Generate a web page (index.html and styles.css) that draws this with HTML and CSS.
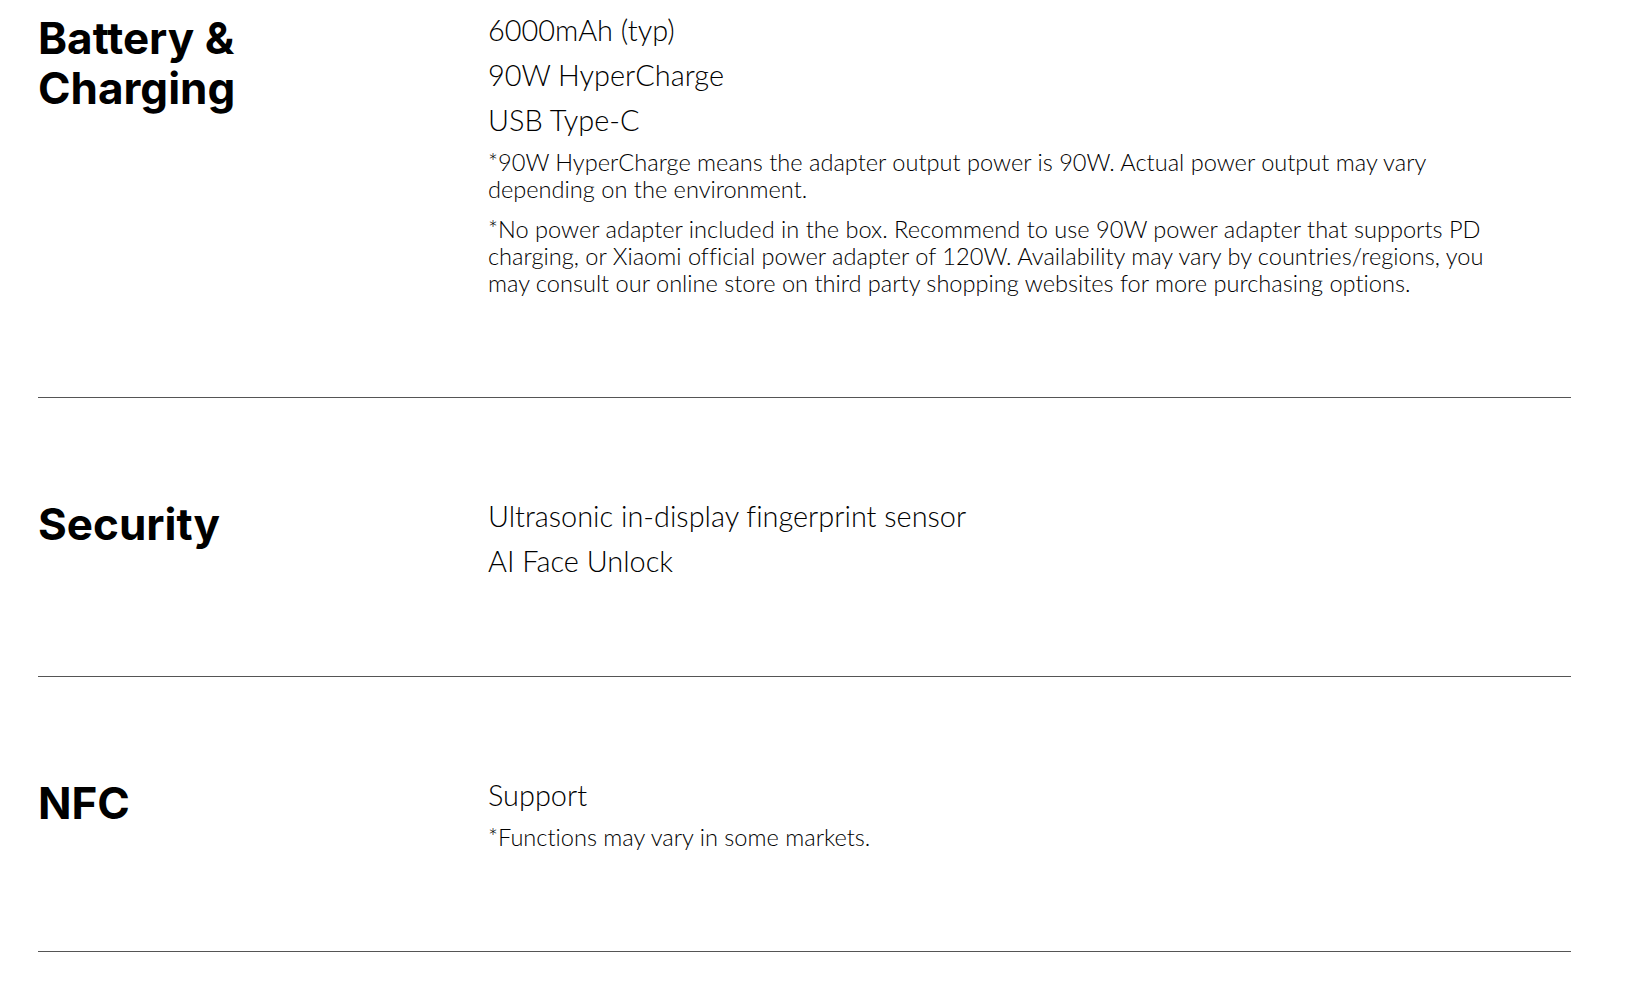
FILE: index.html
```html
<!DOCTYPE html>
<html lang="en">
<head>
<meta charset="utf-8">
<title>Specs</title>
<link rel="stylesheet" href="styles.css">
</head>
<body>
<div class="specs">
  <section class="row row-first">
    <h2 class="title">Battery &amp;<br>Charging</h2>
    <div class="content">
      <p class="item">6000mAh (typ)</p>
      <p class="item">90W HyperCharge</p>
      <p class="item">USB Type-C</p>
      <p class="note">*90W HyperCharge means the adapter output power is 90W. Actual power output may vary depending on the environment.</p>
      <p class="note">*No power adapter included in the box. Recommend to use 90W power adapter that supports PD charging, or Xiaomi official power adapter of 120W. Availability may vary by countries/regions, you may consult our online store on third party shopping websites for more purchasing options.</p>
    </div>
  </section>
  <section class="row">
    <h2 class="title">Security</h2>
    <div class="content">
      <p class="item">Ultrasonic in-display fingerprint sensor</p>
      <p class="item">AI Face Unlock</p>
    </div>
  </section>
  <section class="row">
    <h2 class="title">NFC</h2>
    <div class="content">
      <p class="item">Support</p>
      <p class="note">*Functions may vary in some markets.</p>
    </div>
  </section>
</div>
</body>
</html>
```
FILE: styles.css
```css
html, body {
  margin: 0;
  padding: 0;
  background: #fff;
}
body {
  font-family: "Lato", "Noto Sans", sans-serif;
  color: #000;
  font-variant-ligatures: none;
}
.specs {
  margin-left: 38px;
  width: 1533px;
}
.row {
  display: grid;
  grid-template-columns: 450px 1030px;
  padding: 95.5px 0 92.5px;
  border-bottom: 1px solid #555;
}
.row-first {
  padding-top: 7px;
}
.title {
  margin: 6px 0 0;
  font-family: "Inter", "Noto Sans", sans-serif;
  font-size: 44px;
  line-height: 50px;
  font-weight: 700;
  color: #000;
}
.content {
  min-width: 0;
}
.item {
  margin: 0;
  font-size: 28.9px;
  line-height: 45px;
  font-weight: 300;
}
.note {
  margin: 6.5px 0 0;
  font-size: 23.6px;
  line-height: 27px;
  font-weight: 300;
}
.note + .note {
  margin-top: 13px;
}
.note:last-child {
  margin-bottom: 7.5px;
}
```
